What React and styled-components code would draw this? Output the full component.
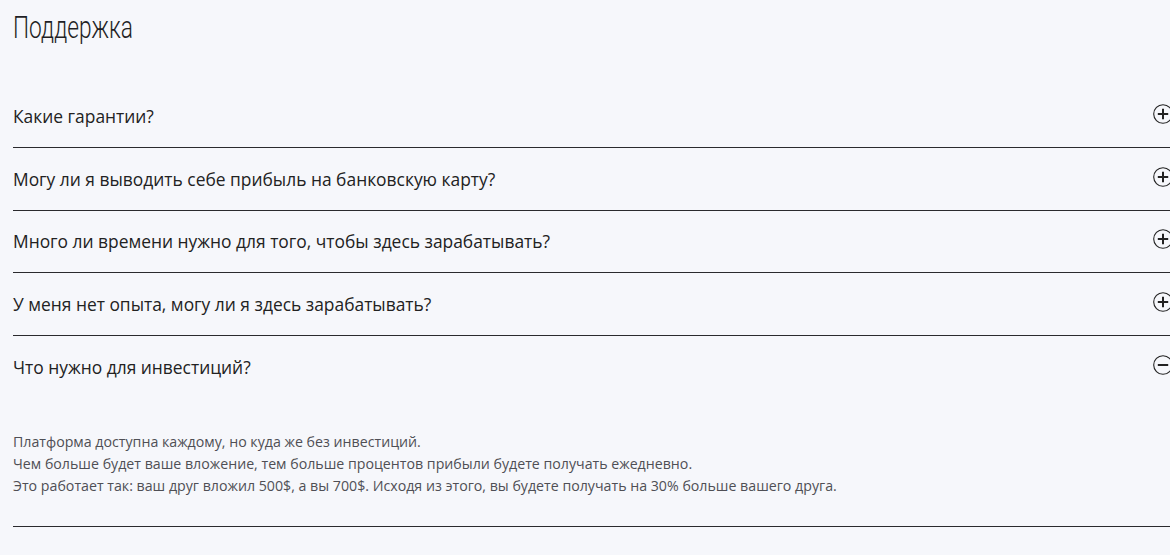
import { useState } from 'react'
import styled, { createGlobalStyle } from 'styled-components'

const GlobalStyle = createGlobalStyle`
    html, body {
        margin: 0;
        background: #f6f7fb;
        overflow-x: hidden;
    }
`

const Page = styled.section`
    padding: 6px 0 0 13px;
    width: 1160px;
    font-family: 'Open Sans', 'Noto Sans', sans-serif;
    color: #222;
`

// condensed heading: no condensed face is installed, so squeeze Roboto
const Title = styled.h1`
    display: inline-block;
    margin: 0 0 37px;
    font-family: 'Roboto', sans-serif;
    font-weight: 300;
    font-size: 32px;
    line-height: 42px;
    color: #1f1f25;
    transform: scaleX(0.71);
    transform-origin: left center;
`

const List = styled.div``

const Item = styled.div`
    border-bottom: 1px solid #2a2a2e;
`

const Question = styled.button`
    display: flex;
    align-items: center;
    justify-content: space-between;
    width: 100%;
    height: 61.75px;
    padding: 0;
    border: 0;
    background: none;
    cursor: pointer;
    font: inherit;
    font-size: 17.4px;
    color: #222;
    text-align: left;
`

const Icon = styled.svg`
    flex: none;
    width: 20px;
    height: 20px;
    margin-top: -4px;
`

const Answer = styled.div`
    padding: 33px 0 29px;
    font-size: 14.2px;
    line-height: 22px;
    color: #4f4f55;
`

const items = [
    { q: 'Какие гарантии?' },
    { q: 'Могу ли я выводить себе прибыль на банковскую карту?' },
    { q: 'Много ли времени нужно для того, чтобы здесь зарабатывать?' },
    { q: 'У меня нет опыта, могу ли я здесь зарабатывать?' },
    {
        q: 'Что нужно для инвестиций?',
        a: [
            'Платформа доступна каждому, но куда же без инвестиций.',
            'Чем больше будет ваше вложение, тем больше процентов прибыли будете получать ежедневно.',
            'Это работает так: ваш друг вложил 500$, а вы 700$. Исходя из этого, вы будете получать на 30% больше вашего друга.',
        ],
    },
]

function ToggleIcon({ open }) {
    return (
        <Icon viewBox="0 0 20 20" fill="none" stroke="#222">
            <circle cx="10" cy="10" r="9.3" strokeWidth="1.1" />
            <path d="M4.8 10h10.4" strokeWidth="2" />
            {!open && <path d="M10 4.8v10.4" strokeWidth="2" />}
        </Icon>
    )
}

function App() {
    const [open, setOpen] = useState(4)
    return (
        <>
            <GlobalStyle />
            <Page>
                <Title>Поддержка</Title>
                <List>
                    {items.map((item, i) => (
                        <Item key={item.q}>
                            <Question onClick={() => setOpen(open === i ? -1 : i)}>
                                {item.q}
                                <ToggleIcon open={open === i} />
                            </Question>
                            {open === i && item.a && (
                                <Answer>
                                    {item.a.map((line) => (
                                        <div key={line}>{line}</div>
                                    ))}
                                </Answer>
                            )}
                        </Item>
                    ))}
                </List>
            </Page>
        </>
    )
}

export default App
